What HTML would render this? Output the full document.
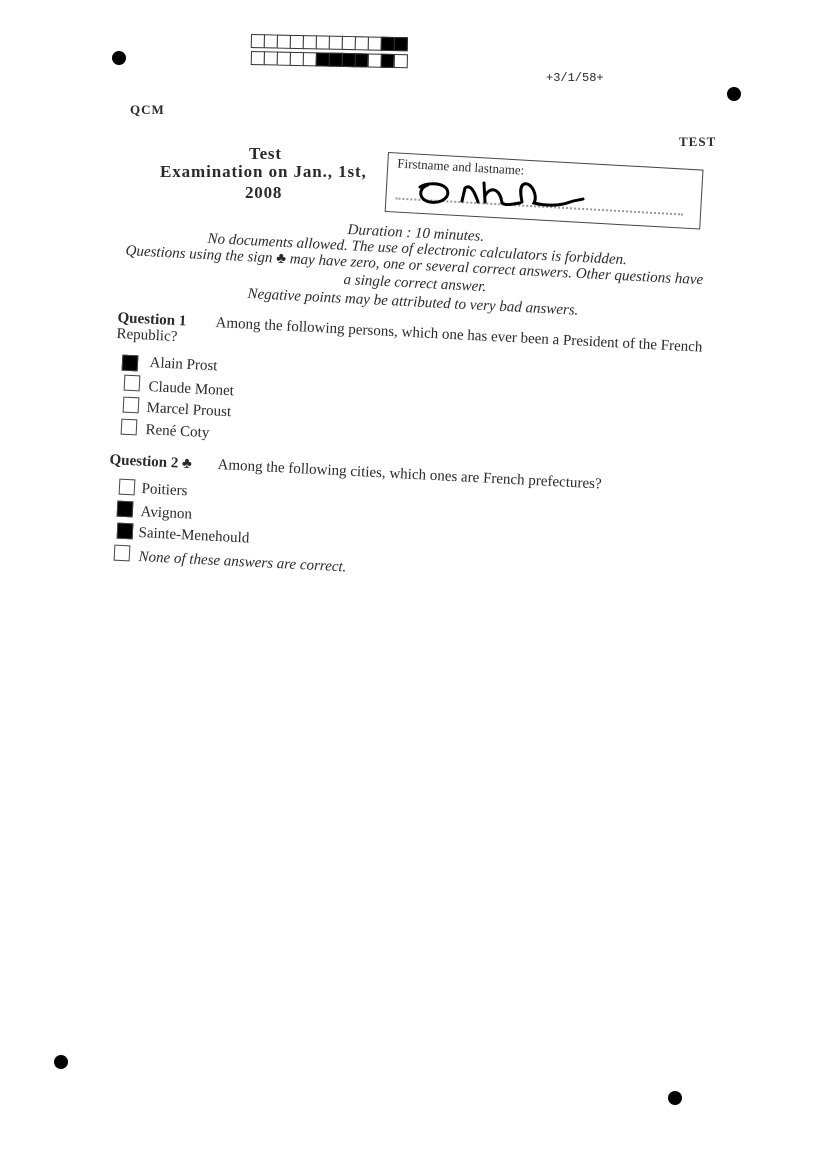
<!DOCTYPE html>
<html><head><meta charset="utf-8"><style>
body{margin:0;width:826px;height:1169px;background:#fff;position:relative;overflow:hidden;font-family:"Liberation Serif",serif;color:#2a2a2a}
.r{position:absolute;white-space:nowrap;transform:rotate(2.9deg);transform-origin:0 0;font-size:15px;line-height:16px}
.b{font-weight:bold}
.i{font-style:italic}
.dot{position:absolute;width:14px;height:14px;border-radius:50%;background:#000}
.cb{position:absolute;width:14px;height:14px;border:1px solid #444;transform:rotate(2.9deg);background:#fff}
.bar{position:absolute;transform:rotate(1.2deg);transform-origin:0 0;display:flex}
.bar span{width:12px;height:12px;border:1px solid #333;margin-right:-1px;background:#fff}
.bar span.k{background:#000}
</style></head><body>
<div class="dot" style="left:112px;top:51px"></div>
<div class="dot" style="left:727px;top:87px"></div>
<div class="dot" style="left:54px;top:1055px"></div>
<div class="dot" style="left:668px;top:1091px"></div>

<div class="bar" style="left:251px;top:34px"><span></span><span></span><span></span><span></span><span></span><span></span><span></span><span></span><span></span><span></span><span class="k"></span><span class="k"></span></div>
<div class="bar" style="left:251px;top:51px"><span></span><span></span><span></span><span></span><span></span><span class="k"></span><span class="k"></span><span class="k"></span><span class="k"></span><span></span><span class="k"></span><span></span></div>

<div class="r" style="left:546px;top:70px;font-family:'Liberation Mono',monospace;font-size:12px;transform:none">+3/1/58+</div>
<div class="r b" style="left:130px;top:102px;font-size:13px;transform:none;letter-spacing:1px">QCM</div>
<div class="r b" style="left:679px;top:134px;font-size:13px;transform:none;letter-spacing:1px">TEST</div>

<div class="r b" style="left:249px;top:146px;font-size:17px;transform:none;letter-spacing:0.8px">Test</div>
<div class="r b" style="left:160px;top:164px;font-size:17px;transform:none;letter-spacing:0.9px">Examination on Jan., 1st,</div>
<div class="r b" style="left:245px;top:185px;font-size:17px;transform:none;letter-spacing:0.8px">2008</div>

<div style="position:absolute;left:388px;top:152px;width:314px;height:58px;border:1px solid #444;transform:rotate(3.2deg);transform-origin:0 0">
<div style="position:absolute;left:9px;top:2px;font-size:13px">Firstname and lastname:</div>
<div style="position:absolute;left:9px;top:44px;width:288px;border-top:2px dotted #999"></div>
</div>
<svg style="position:absolute;left:0;top:0" width="826" height="300"><path d="M428 185 C418 188 418 200 430 202 C442 204 452 196 446 188 C440 182 426 183 420 187 M462 201 L465 188 C470 184 474 190 478 202 M485 202 L484 183 M485 196 C490 186 500 188 502 203 C506 206 512 204 520 203 M522 202 C520 192 520 186 524 184 C532 182 538 196 534 203 C546 206 560 206 570 202 C576 200 580 200 583 199" fill="none" stroke="#000" stroke-width="3" stroke-linecap="round"/></svg>

<div class="r i" style="left:348px;top:222px">Duration : 10 minutes.</div>
<div class="r i" style="left:208px;top:231px">No documents allowed. The use of electronic calculators is forbidden.</div>
<div class="r i" style="left:126px;top:243px">Questions using the sign ♣ may have zero, one or several correct answers. Other questions have</div>
<div class="r i" style="left:344px;top:272px">a single correct answer.</div>
<div class="r i" style="left:248px;top:286px">Negative points may be attributed to very bad answers.</div>

<div class="r b" style="left:118px;top:310px">Question 1</div>
<div class="r" style="left:216px;top:315px">Among the following persons, which one has ever been a President of the French</div>
<div class="r" style="left:117px;top:326px">Republic?</div>

<div class="cb" style="left:122px;top:355px;background:#000"></div>
<div class="r" style="left:150px;top:355px">Alain Prost</div>
<div class="cb" style="left:124px;top:375px"></div>
<div class="r" style="left:149px;top:379px">Claude Monet</div>
<div class="cb" style="left:123px;top:397px"></div>
<div class="r" style="left:147px;top:400px">Marcel Proust</div>
<div class="cb" style="left:121px;top:419px"></div>
<div class="r" style="left:146px;top:422px">René Coty</div>

<div class="r b" style="left:110px;top:452px">Question 2 ♣</div>
<div class="r" style="left:218px;top:457px">Among the following cities, which ones are French prefectures?</div>
<div class="cb" style="left:119px;top:479px"></div>
<div class="r" style="left:142px;top:481px">Poitiers</div>
<div class="cb" style="left:117px;top:501px;background:#000"></div>
<div class="r" style="left:141px;top:504px">Avignon</div>
<div class="cb" style="left:117px;top:523px;background:#000"></div>
<div class="r" style="left:139px;top:525px">Sainte-Menehould</div>
<div class="cb" style="left:114px;top:545px"></div>
<div class="r i" style="left:139px;top:549px">None of these answers are correct.</div>
</body></html>
